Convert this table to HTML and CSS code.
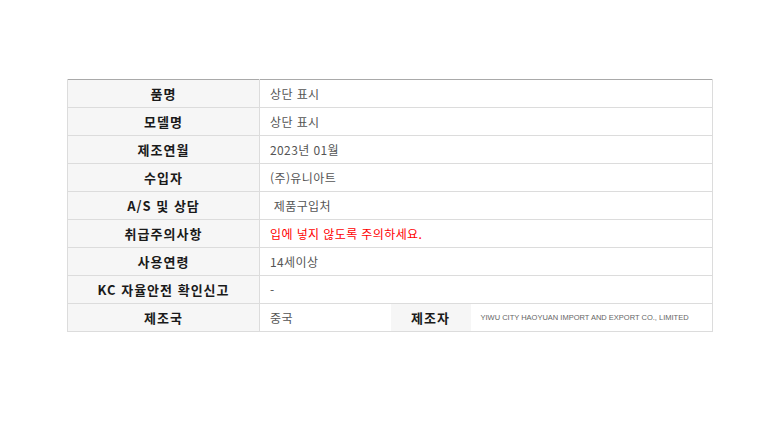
FILE: index.html
```html
<!DOCTYPE html>
<html lang="ko">
<head>
<meta charset="utf-8">
<link rel="stylesheet" href="styles.css">
</head>
<body>
<div class="wrap">
<table class="info">
  <colgroup>
    <col class="c-label"><col class="c-val1"><col class="c-label2"><col class="c-val2">
  </colgroup>
  <tr><th>품명</th><td colspan="3">상단 표시</td></tr>
  <tr><th>모델명</th><td colspan="3">상단 표시</td></tr>
  <tr><th>제조연월</th><td colspan="3">2023년 01월</td></tr>
  <tr><th>수입자</th><td colspan="3">(주)유니아트</td></tr>
  <tr><th>A/S 및 상담</th><td colspan="3">&nbsp;제품구입처</td></tr>
  <tr><th>취급주의사항</th><td colspan="3" class="warn">입에 넣지 않도록 주의하세요.</td></tr>
  <tr><th>사용연령</th><td colspan="3">14세이상</td></tr>
  <tr><th>KC 자율안전 확인신고</th><td colspan="3">-</td></tr>
  <tr class="last"><th>제조국</th><td>중국</td><th class="sub">제조자</th><td class="small">YIWU CITY HAOYUAN IMPORT AND EXPORT CO., LIMITED</td></tr>
</table>
</div>
</body>
</html>
```

FILE: styles.css
```css
html, body {
  margin: 0;
  padding: 0;
  background: #fff;
}
.wrap {
  padding: 79px 0 0 67px;
}
.info {
  width: 646px;
  border-collapse: collapse;
  table-layout: fixed;
  border-top: 1px solid #a9a9a9;
  font-family: "Noto Sans CJK KR", "Noto Sans", sans-serif;
}
.c-label { width: 192px; }
.c-val1 { width: 131px; }
.c-label2 { width: 80px; }
.info th, .info td {
  height: 27px;
  padding: 0;
  border: 1px solid #dcdcdc;
  border-top: 0;
}
.info th {
  background: #f6f6f6;
  color: #1a1a1a;
  font-size: 13px;
  font-weight: bold;
  letter-spacing: 1px;
  text-align: center;
  line-height: 16px;
}
.info td {
  color: #555;
  font-size: 12px;
  letter-spacing: 0.4px;
  padding-left: 10px;
  text-align: left;
  line-height: 16px;
}
.info td.warn {
  color: #ff0000;
}
.info tr.last td, .info tr.last th {
  border-left: 0;
  border-right: 0;
}
.info tr.last th:first-child {
  border-left: 1px solid #dcdcdc;
  border-right: 1px solid #dcdcdc;
}
.info tr.last td:last-child {
  border-right: 1px solid #dcdcdc;
}
.info td.small {
  font-family: "Liberation Sans", Arial, sans-serif;
  font-size: 7.5px;
  letter-spacing: 0;
  color: #666;
  padding-left: 10px;
  white-space: nowrap;
}
```
